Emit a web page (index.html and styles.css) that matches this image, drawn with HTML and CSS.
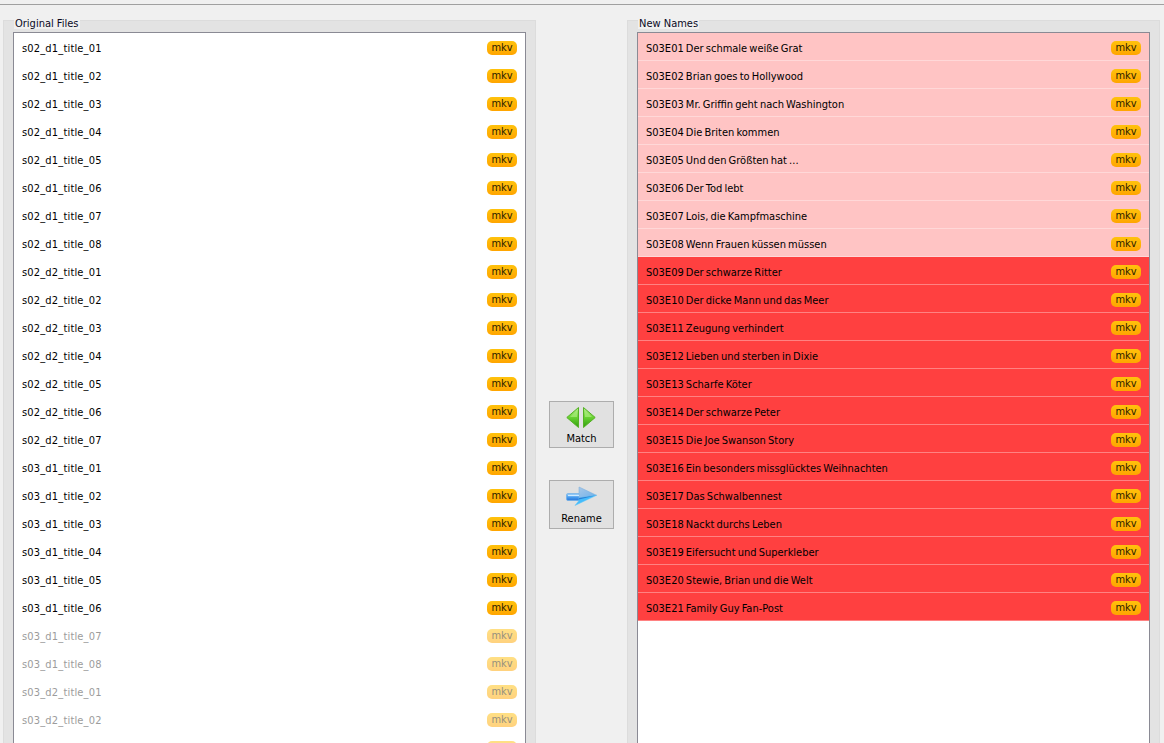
FILE: index.html
```html
<!DOCTYPE html>
<html lang="en">
<head>
<meta charset="utf-8">
<title>Rename</title>
<link rel="stylesheet" href="styles.css">
</head>
<body>
<div class="app">
  <section class="group">
    <h2 class="legend">Original Files</h2>
    <div class="frame">
      <ul class="list" id="left"></ul>
    </div>
  </section>
  <div class="actions">
    <button class="btn match" type="button">
      <svg width="31" height="24" viewBox="0 0 31 24">
        <defs>
          <linearGradient id="g" x1="0" y1="0" x2="0" y2="1"><stop offset="0" stop-color="#b4ee8a"/><stop offset=".45" stop-color="#6ed636"/><stop offset="1" stop-color="#2f9e0c"/></linearGradient>
        </defs>
        <path d="M12.500 2.500V22.500L.8 12.500Z" fill="url(#g)" stroke="#55b026"/>
        <path d="M17.500 2.500V22.500L29.200 12.500Z" fill="url(#g)" stroke="#55b026"/>
        <path d="M11 5V12H4Z" fill="#a8ea7c" opacity=".7"/>
        <path d="M19 5V12H26Z" fill="#a8ea7c" opacity=".7"/>
      </svg>
      <span>Match</span>
    </button>
    <button class="btn rename" type="button">
      <svg width="31" height="20" viewBox="0 0 31 20">
        <defs>
          <linearGradient id="s" x1="0" y1="0" x2="0" y2="1"><stop offset="0" stop-color="#9fd2f6"/><stop offset=".5" stop-color="#4a9ff0"/><stop offset="1" stop-color="#2a76d8"/></linearGradient>
          <linearGradient id="h" x1="0" y1="0" x2="1" y2="1"><stop offset="0" stop-color="#a8c8e8"/><stop offset="1" stop-color="#6db0ea"/></linearGradient>
        </defs>
        <path d="M.5 9Q.5 7.500 2 7.500H14V14.500H2Q.5 14.500 .5 13Z" fill="url(#s)" stroke="#6eaee6" stroke-width=".7"/>
        <path d="M13 1L30.500 9.300L13 12Z" fill="url(#h)" stroke="#7fb2de" stroke-width=".6"/>
        <path d="M13 12L30.500 9.300L9 19.500L13 14.500Z" fill="#45bcfb" stroke="#5ac4fb" stroke-width=".5"/>
        <path d="M13 12L30.500 9.300L13 13.500Z" fill="#2b7fd6"/>
        <path d="M2 9.500H13" stroke="#cfeaff" stroke-width="1.200"/>
      </svg>
      <span>Rename</span>
    </button>
  </div>
  <section class="group">
    <h2 class="legend">New Names</h2>
    <div class="frame">
      <ul class="list" id="right"></ul>
    </div>
  </section>
</div>
<script src="app.js"></script>
</body>
</html>
```
FILE: styles.css
```css
* { box-sizing: border-box; }
html, body { margin: 0; height: 100%; overflow: hidden; }
body {
  background: #f0f0f0;
  font-family: "DejaVu Sans Condensed", "DejaVu Sans", sans-serif;
  font-stretch: condensed;
  font-size: 11px;
  color: #000;
}
.app {
  height: 739px;
  border-top: 1px solid #a0a0a0;
  margin-top: 4px;
  padding: 15px 4px 0 3px;
  display: grid;
  grid-template-columns: 533px 1fr 533px;
  overflow: hidden;
}
.group {
  position: relative;
  background: #e3e3e3;
  border: 1px solid #dcdcdc;
  border-bottom: 0;
  padding: 11px 9px 0 9px;
  display: flex;
  min-height: 0;
}
.legend {
  position: absolute;
  top: -3px;
  left: 10px;
  margin: 0;
  padding: 0 1px;
  background: #f0f0f0;
  font: inherit;
  line-height: 12px;
  height: 11px;
  color: #0a0a1e;
}
.frame {
  flex: 1;
  min-width: 0;
  background: #fff;
  border: 1px solid #8a8a94;
  border-bottom: 0;
  overflow: hidden;
}
.list { list-style: none; margin: 0; padding: 0; }
.row {
  height: 28px;
  display: flex;
  align-items: center;
  justify-content: space-between;
  padding: 1px 8px 0 8px;
}
.name { padding-top: 2px; }
#left .name { letter-spacing: .17px; }
#right .name { word-spacing: -1px; }
#right .row { border-bottom: 1px solid rgba(255,255,255,.35); padding-top: 2px; }
.row.soft { background: #ffc4c4; }
.row.hard { background: #ff4040; }
.row.dim .name { color: #9c9c9c; }
.row.dim .badge { opacity: .5; }
.badge {
  width: 30px;
  height: 14px;
  border-radius: 5px;
  background: linear-gradient(#ffc20c, #ffa500);
  text-align: center;
  line-height: 14px;
  color: #2a2000;
}
.actions {
  display: flex;
  flex-direction: column;
  align-items: center;
  padding-top: 381px;
}
.btn {
  width: 65px;
  background: #e1e1e1;
  border: 1px solid #adadad;
  font: inherit;
  color: #000;
  padding: 0;
  display: flex;
  flex-direction: column;
  align-items: center;
}
.btn span { line-height: 14px; }
.match { height: 47px; padding-top: 3px; }
.match svg { margin-bottom: 3px; }
.rename { height: 49px; margin-top: 32px; padding-top: 5px; }
.rename svg { margin-bottom: 6px; }
```
FILE: app.js
```js
var files = [];
[["s02_d1", 8], ["s02_d2", 7], ["s03_d1", 8], ["s03_d2", 2]].forEach(function (g) {
  for (var i = 1; i <= g[1]; i++) files.push(g[0] + "_title_0" + i);
});
var names = ["S03E01 Der schmale weiße Grat","S03E02 Brian goes to Hollywood","S03E03 Mr. Griffin geht nach Washington","S03E04 Die Briten kommen","S03E05 Und den Größten hat ...","S03E06 Der Tod lebt","S03E07 Lois, die Kampfmaschine","S03E08 Wenn Frauen küssen müssen","S03E09 Der schwarze Ritter","S03E10 Der dicke Mann und das Meer","S03E11 Zeugung verhindert","S03E12 Lieben und sterben in Dixie","S03E13 Scharfe Köter","S03E14 Der schwarze Peter","S03E15 Die Joe Swanson Story","S03E16 Ein besonders missglücktes Weihnachten","S03E17 Das Schwalbennest","S03E18 Nackt durchs Leben","S03E19 Eifersucht und Superkleber","S03E20 Stewie, Brian und die Welt","S03E21 Family Guy Fan-Post"];
function row(text, cls, label) {
  var li = document.createElement("li");
  li.className = "row " + cls;
  var a = document.createElement("span");
  a.className = "name";
  a.textContent = text;
  var b = document.createElement("span");
  b.className = "badge";
  b.textContent = label;
  li.appendChild(a);
  li.appendChild(b);
  return li;
}
var left = document.getElementById("left"), right = document.getElementById("right");
files.forEach(function (f, i) { left.appendChild(row(f, i >= 21 ? "dim" : "", "mkv")); });
left.appendChild(row("", "dim", ""));
names.forEach(function (n, i) { right.appendChild(row(n, i < 8 ? "soft" : "hard", "mkv")); });
```
